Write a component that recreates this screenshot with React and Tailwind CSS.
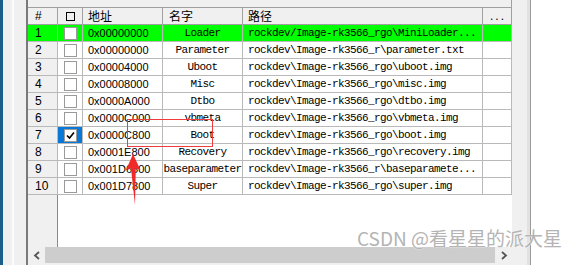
import React from 'react';

const rows = [
  { n: 1, addr: '0x00000000', name: 'Loader', path: 'rockdev/Image-rk3566_rgo\\MiniLoader...', green: true },
  { n: 2, addr: '0x00000000', name: 'Parameter', path: 'rockdev\\Image-rk3566_r\\parameter.txt' },
  { n: 3, addr: '0x00004000', name: 'Uboot', path: 'rockdev\\Image-rk3566_rgo\\uboot.img' },
  { n: 4, addr: '0x00008000', name: 'Misc', path: 'rockdev\\Image-rk3566_rgo\\misc.img' },
  { n: 5, addr: '0x0000A000', name: 'Dtbo', path: 'rockdev\\Image-rk3566_rgo\\dtbo.img' },
  { n: 6, addr: '0x0000C000', name: 'vbmeta', path: 'rockdev\\Image-rk3566_rgo\\vbmeta.img' },
  { n: 7, addr: '0x0000C800', name: 'Boot', path: 'rockdev\\Image-rk3566_rgo\\boot.img', checked: true },
  { n: 8, addr: '0x0001E800', name: 'Recovery', path: 'rockdev\\Image-rk3566_rgo\\recovery.img' },
  { n: 9, addr: '0x001D6800', name: 'baseparameter', path: 'rockdev\\Image-rk3566_r\\baseparamete...' },
  { n: 10, addr: '0x001D7800', name: 'Super', path: 'rockdev\\Image-rk3566_rgo\\super.img' },
];

const sans = "font-['Liberation_Sans',Tahoma,sans-serif]";
const mono = "font-['Liberation_Mono','Noto_Sans_CJK_SC',monospace] tracking-[-0.6px]";
const cjk = "font-['Noto_Sans_CJK_SC',sans-serif]";

const Row = ({ row }) => {
  const bg = row.green ? 'bg-[#00ff00]' : 'bg-white';
  const cell = 'h-[17px] border-r border-b border-[#b9b9b9] flex items-center overflow-hidden whitespace-nowrap';
  return (
    <div className="grid grid-cols-[30px_25px_80px_80px_240px_29px] text-black">
      <div className={`${cell} ${row.green ? 'bg-[#00ff00]' : 'bg-[#f0f0f0]'} border-[#a0a0a0] pl-[7px] text-[12px] ${sans}`}>
        {row.n}
      </div>
      <div className={`${cell} ${row.checked ? 'bg-[#0a78d6]' : bg} justify-center`}>
        <div className="w-[13px] h-[13px] border border-[#9a9a9a] bg-white flex items-center justify-center">
          {row.checked && (
            <svg width="9" height="9" viewBox="0 0 9 9">
              <path d="M1 4.5 L3.5 7 L8 1.5" fill="none" stroke="#000" strokeWidth="1.6" />
            </svg>
          )}
        </div>
      </div>
      <div className={`${cell} ${bg} pl-[5px] text-[11px] ${sans}`}>{row.addr}</div>
      <div className={`${cell} ${bg} justify-center text-[11px] ${mono}`}>{row.name}</div>
      <div className={`${cell} ${bg} pl-[5px] text-[11px] ${mono}`}>{row.path}</div>
      <div className={`${cell} ${bg}`}></div>
    </div>
  );
};

export default function App() {
  const head = 'h-[17px] border-r border-b border-[#a0a0a0] bg-[#f0f0f0] flex items-center text-[12px] text-black';
  return (
    <div className="relative w-[584px] h-[265px] overflow-hidden bg-white flex">
      {/* left window edge */}
      <div className="w-[3px] bg-[#1b5f8a]" />
      <div className="w-[9px] bg-[#f0f0f0]" />
      <div className="w-[2px] bg-[#fbfbfb]" />
      <div className="w-[12px] bg-[#f0f0f0]" />
      <div className="w-[2px] bg-[#7a7a7a]" />

      {/* table */}
      <div className="w-[484px] flex flex-col">
        <div className="h-[8px] bg-[#f0f0f0] border-b border-r border-[#a0a0a0]" />
        <div className="grid grid-cols-[30px_25px_80px_80px_240px_29px]">
          <div className={`${head} pl-[7px] ${sans}`}>#</div>
          <div className={`${head} justify-center`}>
            <div className="w-[9px] h-[9px] border border-black" />
          </div>
          <div className={`${head} pl-[5px] ${cjk}`}>地址</div>
          <div className={`${head} pl-[6px] ${cjk}`}>名字</div>
          <div className={`${head} pl-[5px] ${cjk}`}>路径</div>
          <div className={`${head} pl-[7px] text-[10px] tracking-[2px] ${sans}`}>...</div>
        </div>
        {rows.map((r) => (
          <Row key={r.n} row={r} />
        ))}
        <div className="h-[52px] flex">
          <div className="w-[30px] bg-[#f0f0f0] border-r border-[#8a8a8a]" />
          <div className="flex-1 bg-white" />
        </div>
        <div className="h-[16px] bg-[#f0f0f0] flex items-stretch">
          <div className="w-[17px] flex items-center justify-center">
            <svg width="8" height="9" viewBox="0 0 8 9">
              <path d="M6 1 L2 4.5 L6 8" fill="none" stroke="#555" strokeWidth="1.8" />
            </svg>
          </div>
          <div className="w-[450px] bg-[#cdcdcd]" />
          <div className="flex-1 flex items-center justify-center">
            <svg width="8" height="9" viewBox="0 0 8 9">
              <path d="M2 1 L6 4.5 L2 8" fill="none" stroke="#555" strokeWidth="1.8" />
            </svg>
          </div>
        </div>
        <div className="flex-1 bg-[#f0f0f0]" />
      </div>

      {/* vertical scrollbar + window edge */}
      <div className="w-[15px] bg-[#f0f0f0]" />
      <div className="w-[3px] bg-[#e2e2e2]" />
      <div className="w-[1px] bg-[#9a9a9a]" />
      <div className="flex-1 bg-white" />

      {/* red annotations */}
      <div className="absolute left-[127px] top-[119px] w-[86px] h-[28px] border border-[#f03c3c]" />
      <svg className="absolute left-0 top-0" width="584" height="265" viewBox="0 0 584 265">
        <polygon points="133,154 140.5,170 135.8,168.5 135,205 131,168.5 126,170" fill="#f02a2a" />
      </svg>

      {/* watermark */}
      <div
        className="absolute left-[357px] top-[228px] text-[19px] leading-none text-[#b4b4b4] font-['Noto_Sans_CJK_SC',sans-serif] whitespace-nowrap [text-shadow:0_0_1px_#fff,0_0_1px_#fff]"
      >
        CSDN @看星星的派大星
      </div>
    </div>
  );
}
